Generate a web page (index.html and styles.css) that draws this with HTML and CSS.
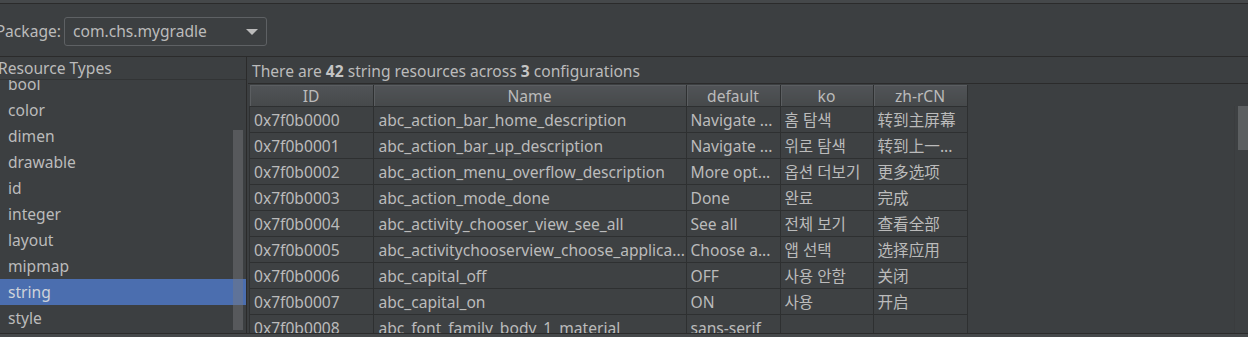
FILE: index.html
```html
<!DOCTYPE html>
<html lang="en">
<head>
  <meta charset="UTF-8" />
  <title>Resources</title>
  <link rel="stylesheet" href="styles.css">
</head>
<body>
  <div class="topbar"></div>

  <div class="package-row">
    <label class="package-label">Package:</label>
    <div class="combo">
      <span>com.chs.mygradle</span>
      <svg class="combo-arrow" width="12" height="6" viewBox="0 0 12 6"><polygon points="0,0 12,0 6,6" fill="#bbbbbb"/></svg>
    </div>
  </div>

  <div class="main">
    <div class="types-panel">
      <div class="panel-header">Resource Types</div>
      <ul class="types-list">
        <li>bool</li>
        <li>color</li>
        <li>dimen</li>
        <li>drawable</li>
        <li>id</li>
        <li>integer</li>
        <li>layout</li>
        <li>mipmap</li>
        <li class="selected">string</li>
        <li>style</li>
      </ul>
      <!-- scrollbar thumb sits over the list -->
      <div class="types-thumb"></div>
    </div>

    <div class="resources-panel">
      <div class="summary">There are <b>42</b> string resources across <b>3</b> configurations</div>
      <div class="table-view">
        <table class="res-table">
          <thead>
            <tr>
              <th class="col-id">ID</th>
              <th class="col-name">Name</th>
              <th class="col-def">default</th>
              <th class="col-ko">ko</th>
              <th class="col-zh">zh-rCN</th>
            </tr>
          </thead>
          <tbody>
            <tr><td>0x7f0b0000</td><td>abc_action_bar_home_description</td><td>Navigate ...</td><td>홈 탐색</td><td>转到主屏幕</td></tr>
            <tr><td>0x7f0b0001</td><td>abc_action_bar_up_description</td><td>Navigate ...</td><td>위로 탐색</td><td>转到上一...</td></tr>
            <tr><td>0x7f0b0002</td><td>abc_action_menu_overflow_description</td><td>More opt...</td><td>옵션 더보기</td><td>更多选项</td></tr>
            <tr><td>0x7f0b0003</td><td>abc_action_mode_done</td><td>Done</td><td>완료</td><td>完成</td></tr>
            <tr><td>0x7f0b0004</td><td>abc_activity_chooser_view_see_all</td><td>See all</td><td>전체 보기</td><td>查看全部</td></tr>
            <tr><td>0x7f0b0005</td><td>abc_activitychooserview_choose_applica...</td><td>Choose a...</td><td>앱 선택</td><td>选择应用</td></tr>
            <tr><td>0x7f0b0006</td><td>abc_capital_off</td><td>OFF</td><td>사용 안함</td><td>关闭</td></tr>
            <tr><td>0x7f0b0007</td><td>abc_capital_on</td><td>ON</td><td>사용</td><td>开启</td></tr>
            <tr><td>0x7f0b0008</td><td>abc_font_family_body_1_material</td><td>sans-serif</td><td></td><td></td></tr>
          </tbody>
        </table>
        <div class="table-scroll"><div class="table-thumb"></div></div>
      </div>
    </div>
  </div>

  <div class="statusbar"></div>
</body>
</html>
```

FILE: styles.css
```css
body {
  margin: 0;
  padding: 0;
  width: 1248px;
  height: 337px;
  overflow: hidden;
  font-family: 'Noto Sans', 'Noto Sans CJK SC', sans-serif;
  font-size: 15.6px;
  background-color: #3c3f41;
  color: #bbbbbb;
}

.topbar {
  height: 3px;
  background: #45484a;
  border-bottom: 1px solid #2b2b2b;
}

.package-row {
  display: flex;
  align-items: center;
  gap: 3px;
  height: 53px;
  padding-top: 13px;
  padding-bottom: 11px;
  border-bottom: 1px solid #2b2b2b;
  box-sizing: border-box;
}

/* label is a little wider than its slot, so it spills off the left edge */
.package-label {
  display: flex;
  justify-content: flex-end;
  width: 61px;
  flex-shrink: 0;
  white-space: nowrap;
}

.combo {
  display: flex;
  align-items: center;
  justify-content: space-between;
  width: 203px;
  height: 29px;
  padding: 0 8px 0 8px;
  box-sizing: border-box;
  border: 1px solid #5e6164;
  border-radius: 3px;
  background: #3c3f41;
}

.combo-arrow {
  margin-top: 2px;
}

.main {
  display: flex;
  height: 276px;
}

.types-panel {
  position: relative;
  width: 246px;
  border-right: 1px solid #2b2b2b;
  margin-right: 1px;
  overflow: hidden;
}

.panel-header {
  height: 22px;
  line-height: 22px;
  margin-left: -2px;
  border-bottom: 1px solid #323435;
  background: #3c3f41;
  position: relative;
  z-index: 1;
}

.types-list {
  list-style: none;
  margin: -9px 0 0 0;
  padding: 0;
}

.types-list li {
  height: 26px;
  line-height: 26px;
  padding-left: 8px;
}

.types-list li.selected {
  background: #4b6eaf;
  color: #cfd3da;
}

.types-thumb {
  position: absolute;
  left: 233px;
  top: 73px;
  width: 10px;
  height: 200px;
  background: rgba(120, 123, 126, 0.45);
}

.resources-panel {
  flex: 1;
  display: flex;
  flex-direction: column;
}

.summary {
  height: 26px;
  line-height: 28px;
  padding-left: 4px;
  border-bottom: 1px solid #2b2b2b;
}

.summary b {
  font-weight: bold;
  color: #c4c4c4;
}

.table-view {
  position: relative;
  flex: 1;
  overflow: hidden;
  padding: 1px 0 0 1px;
}

.res-table {
  border-collapse: collapse;
  table-layout: fixed;
  width: 713px;
}

.col-id { width: 123px; }
.col-name { width: 312px; }
.col-def { width: 93px; }
.col-ko { width: 92px; }
.col-zh { width: 93px; }

.res-table th {
  height: 20px;
  padding: 1px 0 0 0;
  font-weight: normal;
  text-align: center;
  line-height: 20px;
  background: linear-gradient(#515457, #46494b);
  border-right: 1px solid #2e3031;
  box-shadow: inset 1px 1px 0 #5b5e61;
}

.res-table td {
  height: 23px;
  padding: 2px 0 0 4px;
  white-space: nowrap;
  overflow: hidden;
  line-height: 23px;
  border: 1px solid #2e3031;
  background: #3e4143;
}

.res-table td:nth-child(2) {
  padding-left: 5px;
}

.table-scroll {
  position: absolute;
  top: 22px;
  right: 0;
  bottom: 0;
  width: 13px;
  border-left: 1px solid #3a3c3e;
  background: #3d4042;
}

.table-thumb {
  margin: 0 0 0 3px;
  width: 10px;
  height: 44px;
  background: #5c5f61;
}

.statusbar {
  height: 3px;
  border-top: 1px solid #2b2b2b;
  background: #45484a;
}
```
